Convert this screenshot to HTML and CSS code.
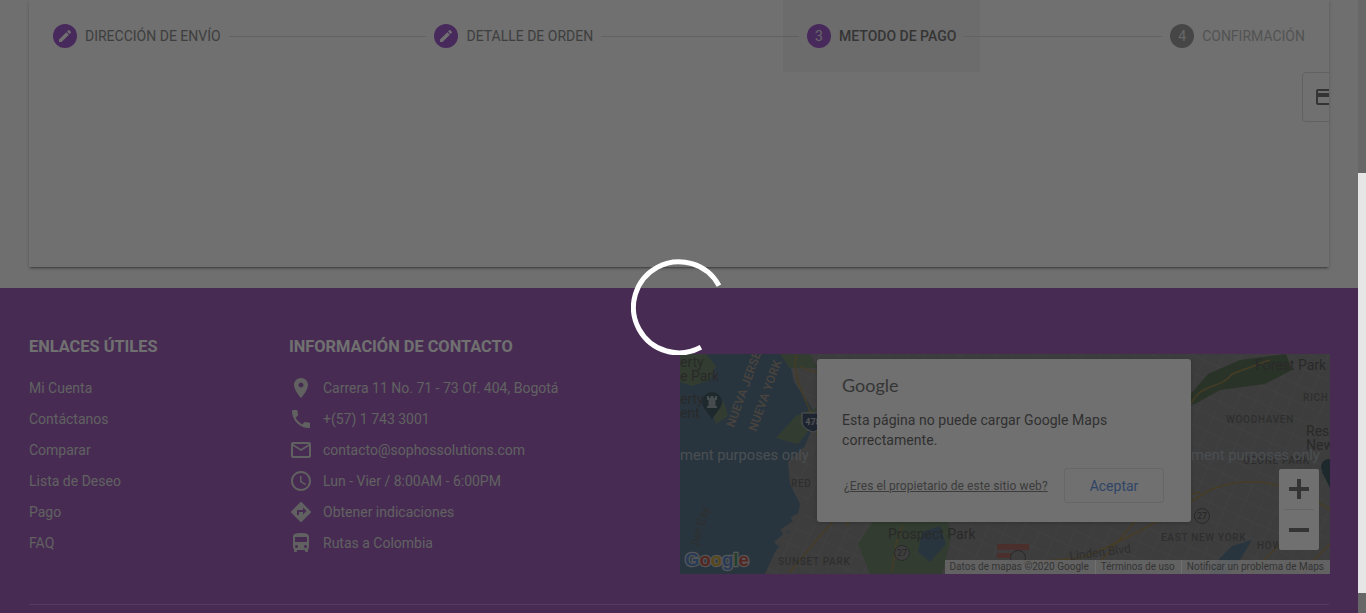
FILE: index.html
```html
<!DOCTYPE html>
<html lang="es">
<head>
<meta charset="utf-8">
<title>Checkout</title>
<link rel="stylesheet" href="styles.css">
</head>
<body>
<div class="page">
  <main class="content">
    <section class="card">
      <div class="stepper">
        <div class="step">
          <span class="badge"><svg class="badge-icon" viewBox="0 0 24 24"><path d="M3 17.25V21h3.75L17.81 9.94l-3.75-3.75L3 17.25zM20.71 7.04c.39-.39.39-1.02 0-1.41l-2.34-2.34c-.39-.39-1.02-.39-1.41 0l-1.83 1.83 3.75 3.75 1.83-1.83z"/></svg></span>
          <span class="label">DIRECCIÓN DE ENVÍO</span>
        </div>
        <div class="line"></div>
        <div class="step">
          <span class="badge"><svg class="badge-icon" viewBox="0 0 24 24"><path d="M3 17.25V21h3.75L17.81 9.94l-3.75-3.75L3 17.25zM20.71 7.04c.39-.39.39-1.02 0-1.41l-2.34-2.34c-.39-.39-1.02-.39-1.41 0l-1.83 1.83 3.75 3.75 1.83-1.83z"/></svg></span>
          <span class="label">DETALLE DE ORDEN</span>
        </div>
        <div class="line"></div>
        <div class="step step-active">
          <span class="badge">3</span>
          <span class="label">METODO DE PAGO</span>
        </div>
        <div class="line"></div>
        <div class="step step-off">
          <span class="badge">4</span>
          <span class="label">CONFIRMACIÓN</span>
        </div>
      </div>
      <div class="methods">
        <div class="method">
          <svg class="method-icon" viewBox="0 0 24 24"><path d="M20 4H4c-1.11 0-1.99.89-1.99 2L2 18c0 1.11.89 2 2 2h16c1.11 0 2-.89 2-2V6c0-1.11-.89-2-2-2zm0 14H4v-6h16v6zm0-10H4V6h16v2z"/></svg>
        </div>
      </div>
    </section>
  </main>
  <footer class="footer">
    <div class="columns">
      <nav class="col col-links">
        <h3 class="col-title">ENLACES ÚTILES</h3>
        <ul class="list">
          <li class="row">Mi Cuenta</li>
          <li class="row">Contáctanos</li>
          <li class="row">Comparar</li>
          <li class="row">Lista de Deseo</li>
          <li class="row">Pago</li>
          <li class="row">FAQ</li>
        </ul>
      </nav>
      <div class="col col-contact">
        <h3 class="col-title">INFORMACIÓN DE CONTACTO</h3>
        <ul class="list">
          <li class="row"><svg class="row-icon" viewBox="0 0 24 24"><path d="M12 2C8.13 2 5 5.13 5 9c0 5.25 7 13 7 13s7-7.75 7-13c0-3.87-3.13-7-7-7zm0 9.5c-1.38 0-2.5-1.12-2.5-2.5s1.12-2.5 2.5-2.5 2.5 1.12 2.5 2.5-1.12 2.5-2.5 2.5z"/></svg>Carrera 11 No. 71 - 73 Of. 404, Bogotá</li>
          <li class="row"><svg class="row-icon" viewBox="0 0 24 24"><path d="M6.62 10.79c1.44 2.83 3.76 5.14 6.59 6.59l2.2-2.2c.27-.27.67-.36 1.02-.24 1.12.37 2.33.57 3.57.57.55 0 1 .45 1 1V20c0 .55-.45 1-1 1-9.39 0-17-7.61-17-17 0-.55.45-1 1-1h3.5c.55 0 1 .45 1 1 0 1.25.2 2.45.57 3.57.11.35.03.74-.25 1.02l-2.2 2.2z"/></svg>+(57) 1 743 3001</li>
          <li class="row"><svg class="row-icon" viewBox="0 0 24 24"><path d="M20 4H4c-1.1 0-1.99.9-1.99 2L2 18c0 1.1.9 2 2 2h16c1.1 0 2-.9 2-2V6c0-1.1-.9-2-2-2zm0 14H4V8l8 5 8-5v10zm-8-7L4 6h16l-8 5z"/></svg>contacto@sophossolutions.com</li>
          <li class="row"><svg class="row-icon" viewBox="0 0 24 24"><path d="M11.99 2C6.47 2 2 6.48 2 12s4.47 10 9.99 10C17.52 22 22 17.52 22 12S17.52 2 11.99 2zM12 20c-4.42 0-8-3.58-8-8s3.58-8 8-8 8 3.58 8 8-3.58 8-8 8zm.5-13H11v6l5.25 3.15.75-1.23-4.5-2.67z"/></svg>Lun - Vier / 8:00AM - 6:00PM</li>
          <li class="row"><svg class="row-icon" viewBox="0 0 24 24"><path d="M21.71 11.29l-9-9c-.39-.39-1.02-.39-1.41 0l-9 9c-.39.39-.39 1.02 0 1.41l9 9c.39.39 1.02.39 1.41 0l9-9c.39-.38.39-1.01 0-1.41zM14 14.5V12h-4v3H8v-4c0-.55.45-1 1-1h5V7.5l3.5 3.5-3.5 3.5z"/></svg>Obtener indicaciones</li>
          <li class="row"><svg class="row-icon" viewBox="0 0 24 24"><path d="M4 16c0 .88.39 1.67 1 2.22V20c0 .55.45 1 1 1h1c.55 0 1-.45 1-1v-1h8v1c0 .55.45 1 1 1h1c.55 0 1-.45 1-1v-1.78c.61-.55 1-1.34 1-2.22V6c0-3.5-3.58-4-8-4s-8 .5-8 4v10zm3.5 1c-.83 0-1.5-.67-1.5-1.5S6.67 14 7.5 14s1.5.67 1.5 1.5S8.33 17 7.5 17zm9 0c-.83 0-1.5-.67-1.5-1.5s.67-1.5 1.5-1.5 1.5.67 1.5 1.5-.67 1.5-1.5 1.5zm1.5-6H6V6h12v5z"/></svg>Rutas a Colombia</li>
        </ul>
      </div>
      <div class="col col-map">
        <div class="map">
          <svg class="map-canvas" viewBox="0 0 650 220">
            <defs>
              <pattern id="streets" width="16" height="16" patternUnits="userSpaceOnUse" patternTransform="rotate(24)">
                <path class="m-grid" d="M0 0H16M0 0V16"/>
              </pattern>
            </defs>
            <rect class="m-water" width="650" height="220"/>
            <path class="m-land" d="M108 0L114 28L128 48L137 62L125 92L108 108L110 130L120 150L118 162L108 180L95 198L85 220H650V0Z"/>
            <path class="m-streets" d="M108 0L114 28L128 48L137 62L125 92L108 108L110 130L120 150L118 162L108 180L95 198L85 220H650V0Z"/>
            <path class="m-park" d="M0 0H26L36 12L30 26L12 32L0 28Z"/>
            <path class="m-park" d="M30 52L44 48L48 62L36 70Z"/>
            <path class="m-park" d="M96 84L116 62L136 54L134 70L118 90Z"/>
            <path class="m-park" d="M205 150H262L272 180L262 220H190L178 190Z"/>
            <path class="m-park-dark" d="M500 52L528 20L560 6L606 0L612 16L585 30L540 36L515 50Z"/>
            <path class="m-park" d="M100 0H130L138 14H110Z"/>
            <path class="m-water-inner" d="M242 178L260 172L266 190L250 208L238 198Z"/>
            <path class="m-water-inner" d="M532 212L552 192L572 186L560 206L548 220H530Z"/>
            <path class="m-pier" d="M96 190L108 180M102 178L114 170M112 166L124 160M120 156L134 154M128 150L142 146"/>
            <path class="m-road" d="M116 0C112 22 124 42 134 66C138 84 142 100 146 112"/>
            <path class="m-road" d="M120 12C138 24 152 14 170 22"/>
            <path class="m-road" d="M166 172L190 140L212 110M212 160L192 130L178 112M110 218L140 182L160 160"/>
            <path class="m-road" d="M212 218L216 190L222 172"/>
            <path class="m-road" d="M510 52C520 28 540 36 552 20L590 6"/>
            <path class="m-road" d="M330 210L400 204C440 190 480 166 530 136C570 120 610 128 650 156"/>
            <path class="m-road" d="M420 208L470 150L520 138"/>
            <path class="m-road" d="M620 220L650 190"/>
            <path class="m-road" d="M570 220L600 190"/>
            <path class="m-red" d="M317 190H349V196H317ZM317 199H341V204H317Z"/>
            <text class="m-city" x="0" y="13">erty</text>
            <text class="m-city" x="0" y="27">e Park</text>
            <text class="m-city" x="0" y="50">erty</text>
            <text class="m-city" x="0" y="64">ent</text>
            <text class="m-state" transform="translate(54 74) rotate(-70)">NUEVA JERSEY</text>
            <text class="m-state" transform="translate(76 78) rotate(-70)">NUEVA YORK</text>
            <text class="m-small" transform="translate(18 192) rotate(-73)">per Bay</text>
            <circle class="m-pin" cx="32" cy="48" r="10"/>
            <path class="m-pin" d="M24 54L32 65L40 54Z"/>
            <path class="m-pin-in" d="M27 54H37V52H35.500V46H37V42H35V44H33.500V42H30.500V44H29V42H27V46H28.500V52H27Z"/>
            <path class="m-shield" d="M122 59H144V68C144 74 136 77 133 78C130 77 122 74 122 68Z"/>
            <text class="m-shield-text" x="133" y="71">478</text>
            <text class="m-hood" x="111" y="133">RED</text>
            <text class="m-hood" x="98" y="211">SUNSET PARK</text>
            <text class="m-city" x="208" y="185">Prospect Park</text>
            <text class="m-city" x="575" y="16">Forest Park</text>
            <text class="m-hood" x="623" y="47">RICH</text>
            <text class="m-hood" x="546" y="69">WOODHAVEN</text>
            <text class="m-city" x="626" y="82">Res</text>
            <text class="m-city" x="626" y="96">New</text>
            <text class="m-hood" x="563" y="110">OZONE PARK</text>
            <text class="m-hood" x="481" y="187">EAST NEW YORK</text>
            <text class="m-hood" x="577" y="195">HOW</text>
            <text class="m-small" transform="translate(390 206) rotate(-7)">Linden Blvd</text>
            <circle class="m-route" cx="522" cy="162" r="7.500"/>
            <text class="m-route-text" x="522" y="165">27</text>
            <circle class="m-route" cx="222" cy="199" r="7.500"/>
            <text class="m-route-text" x="222" y="202">27</text>
            <circle class="m-route" cx="338" cy="204" r="7.500"/>
            <circle class="m-pin" cx="649" cy="113" r="8"/>
            <path class="m-pin" d="M642 118L650 134L650 118Z"/>
            <text class="m-watermark" x="0" y="106">ment purposes only</text>
            <text class="m-watermark" x="511" y="106">ment purposes only</text>
            <text class="m-logo" y="212"><tspan class="g-blue" x="5">G</tspan><tspan class="g-red">o</tspan><tspan class="g-yellow">o</tspan><tspan class="g-blue">g</tspan><tspan class="g-green">l</tspan><tspan class="g-red">e</tspan></text>
          </svg>
          <div class="map-dialog">
            <div class="g-word">Google</div>
            <p class="dialog-text">Esta página no puede cargar Google Maps correctamente.</p>
            <div class="dialog-actions">
              <span class="dialog-link">¿<u>Eres el propietario de este sitio web?</u></span>
              <button class="dialog-btn">Aceptar</button>
            </div>
          </div>
          <div class="zoom-ctl">
            <svg class="zoom-btn" viewBox="0 0 40 40"><path d="M10 18H18V10H22V18H30V22H22V30H18V22H10Z"/></svg>
            <div class="zoom-sep"></div>
            <svg class="zoom-btn" viewBox="0 0 40 40"><path d="M10 18H30V22H10Z"/></svg>
          </div>
          <div class="attrib">
            <span class="attrib-item">Datos de mapas ©2020 Google</span>
            <span class="attrib-item">Términos de uso</span>
            <span class="attrib-item">Notificar un problema de Maps</span>
          </div>
        </div>
      </div>
    </div>
    <div class="rule"></div>
  </footer>
</div>
<div class="backdrop"></div>
<svg class="spinner" viewBox="0 0 96 96"><path d="M87.970 26.670A45.500 45.500 0 1 0 69.900 88.200"/></svg>
<div class="scrollbar">
  <div class="sb-up"></div>
  <div class="sb-track"></div>
  <div class="sb-down"></div>
</div>
</body>
</html>
```
FILE: styles.css
```css
* { box-sizing: border-box; }
html, body { margin: 0; height: 100%; overflow: hidden; }
body { font-family: Roboto, "Liberation Sans", sans-serif; background: #fdfdfd; }

.page { width: 1358px; height: 613px; overflow: hidden; }

.content { padding: 0 29px 21px; }
.card { height: 267px; background: #fff; box-shadow: 0 3px 1px -2px rgba(0,0,0,.2), 0 2px 2px 0 rgba(0,0,0,.14), 0 1px 5px 0 rgba(0,0,0,.12); overflow: hidden; }

.stepper { display: flex; align-items: center; height: 72px; }
.step { display: flex; align-items: center; height: 72px; padding: 0 24px; flex: none; }
.step-active { background: rgba(0,0,0,.04); }
.line { flex: 1; height: 1px; margin: 0 -16px; background: #dfdfdf; min-width: 32px; }
.badge { width: 24px; height: 24px; border-radius: 50%; background: #a45fd2; color: #e8e8e8; font-size: 14px; display: flex; align-items: center; justify-content: center; margin-right: 8px; flex: none; }
.badge-icon { width: 16px; height: 16px; fill: #fff; }
.label { font-size: 14px; color: #8e8e8e; white-space: nowrap; }
.step-active .label { color: #7a7a7a; font-weight: 500; }
.step-off .badge { background: #a0a0a0; }
.step-off .label { color: #bdbdbd; }

.methods { display: flex; padding-left: 1273px; }
.method { flex: none; width: 80px; height: 50px; border: 1px solid #dcdcdc; border-radius: 4px; padding: 12px 11px; }
.method-icon { display: block; width: 24px; height: 24px; fill: #777; }

.footer { background: #a163bd; padding: 49px 29px 40px; }
.columns { display: grid; grid-template-columns: 260px 391px 650px; }
.col-title { margin: 0 0 15px; font-size: 16.38px; line-height: 20px; font-weight: 700; color: #fff; }
.list { list-style: none; margin: 0; padding: 0; }
.row { display: flex; align-items: center; height: 31px; font-size: 14px; color: #dcdcdc; }
.row-icon { width: 24px; height: 24px; fill: #dcdcdc; margin-right: 10px; flex: none; }

.col-map { padding-top: 17px; min-width: 0; }
.map { position: relative; height: 220px; overflow: hidden; }
.map-canvas { display: block; width: 650px; height: 220px; }
.m-water { fill: #5c7a90; }
.m-land { fill: #8c8c8c; }
.m-streets { fill: url(#streets); }
.m-grid { stroke: #979797; stroke-width: 1; fill: none; }
.m-park { fill: #748a6f; }
.m-park-dark { fill: #61755c; }
.m-water-inner { fill: #5c7a90; }
.m-pier { stroke: #8c8c8c; stroke-width: 6; fill: none; }
.m-road { stroke: #a08a55; stroke-width: 1.500; fill: none; }
.m-red { fill: #a86c68; }
.m-city { font: 14px Roboto, sans-serif; fill: #5e5e5e; }
.m-state { font: 500 12px Roboto, sans-serif; fill: #a89a8c; letter-spacing: .3px; }
.m-small { font: 12px Roboto, sans-serif; fill: #6a6a6a; }
.m-hood { font: 500 10px Roboto, sans-serif; fill: #6a6a6a; letter-spacing: .7px; }
.m-pin { fill: #465d66; }
.m-pin-in { fill: #a0abaf; }
.m-shield { fill: #465470; stroke: #bbb; stroke-width: 1; }
.m-shield-text { font: 700 9px Roboto, sans-serif; fill: #bbb; text-anchor: middle; }
.m-route { fill: #8c8c8c; stroke: #5e5e5e; stroke-width: 1; }
.m-route-text { font: 9px Roboto, sans-serif; fill: #555; text-anchor: middle; }
.m-watermark { font: 14.700px Roboto, sans-serif; fill: #aab2b8; }
.m-logo { font: 700 18.500px "Liberation Sans", sans-serif; stroke: #c4c4c4; stroke-width: 2.500px; paint-order: stroke; }
.g-blue { fill: #5a86c8; }
.g-red { fill: #c0584e; }
.g-yellow { fill: #c8a23a; }
.g-green { fill: #4c9060; }

.map-dialog { position: absolute; left: 137px; top: 5px; width: 374px; height: 163px; background: #fff; border-radius: 3px; padding: 14px 25px 0; box-shadow: 0 1px 4px rgba(0,0,0,.2); }
.g-word { font: 18px Lato, sans-serif; color: #7a7a7a; line-height: 24px; }
.dialog-text { margin: 13px 0 0; font-size: 14px; line-height: 20px; color: #6e6e6e; letter-spacing: .05px; }
.dialog-actions { display: flex; align-items: center; justify-content: space-between; padding: 0 2px; margin-top: 18px; }
.dialog-link { font-size: 12px; letter-spacing: .08px; color: #8a8a8a; }
.dialog-btn { width: 100px; height: 35px; margin-right: 0; border: 1px solid #e8e8e8; border-radius: 3px; background: #fff; font: 14px Roboto, sans-serif; color: #6f9ce8; padding: 0; }

.zoom-ctl { position: absolute; left: 599px; top: 115px; width: 40px; height: 81px; background: #fff; border-radius: 2px; }
.zoom-btn { display: block; width: 40px; height: 40px; fill: #777; }
.zoom-sep { height: 1px; margin: 0 5px; background: #e6e6e6; }

.attrib { position: absolute; right: 0; bottom: 0; height: 14px; display: flex; align-items: center; background: rgba(255,255,255,.72); font-size: 10px; color: #777; white-space: nowrap; }
.attrib-item { padding: 0 6px 0 5px; height: 14px; line-height: 14px; }
.attrib-item + .attrib-item { border-left: 1px solid #fff; }

.rule { height: 1px; margin-top: 30px; background: #c086d8; }

.backdrop { position: fixed; inset: 0; background: rgba(0,0,0,.56); }
.spinner { position: fixed; left: 631px; top: 259px; width: 96px; height: 96px; fill: none; stroke: #fff; stroke-width: 5; }

.scrollbar { position: fixed; top: 0; right: 0; bottom: 0; width: 8px; display: flex; flex-direction: column; }
.sb-up { height: 173px; background: #676767; }
.sb-track { height: 420px; background: #e6e6e6; }
.sb-down { flex: 1; background: #676767; }
```
